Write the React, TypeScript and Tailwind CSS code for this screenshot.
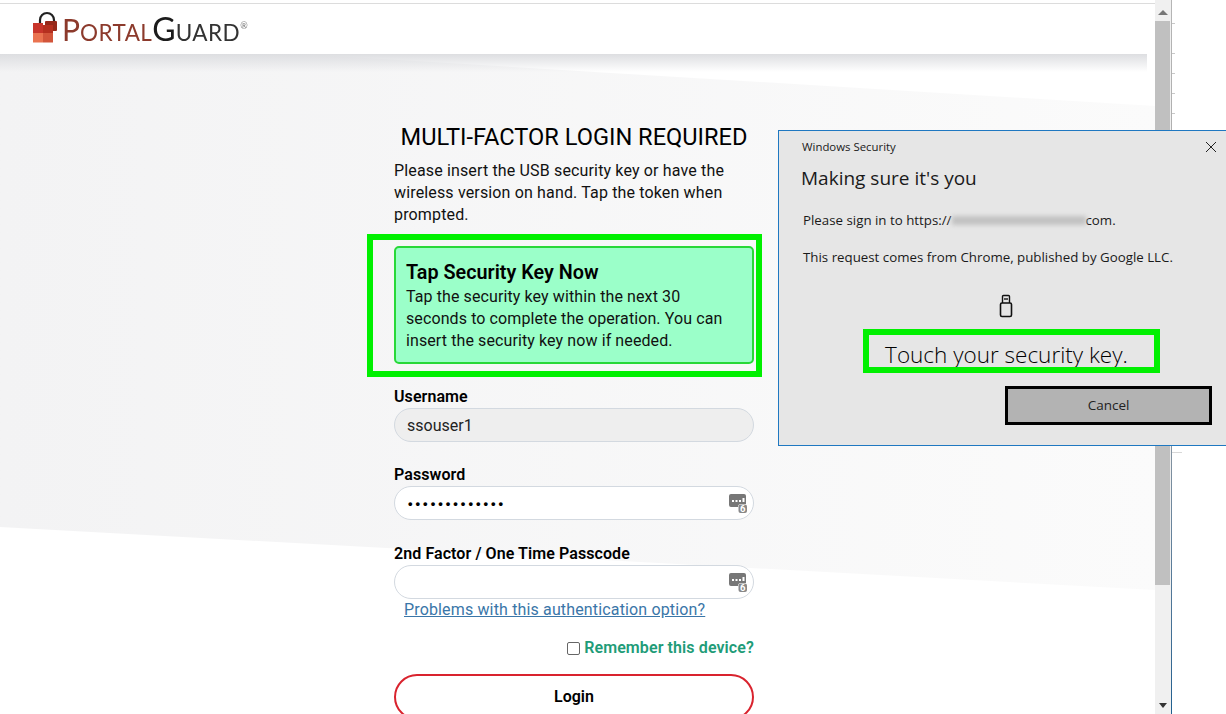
import { Fragment } from "react";

const ticks = ["top-[23px]", "top-[53px]", "top-[73px]", "top-[93px]", "top-[113px]"];

function OtpIcon() {
    return (
        <svg width="18" height="19" viewBox="0 0 18 19" className="absolute right-[6px] top-[7px]">
            <path d="M2 0h13a2 2 0 0 1 2 2v8h-5a3 3 0 0 0-3 3H2a2 2 0 0 1-2-2V2a2 2 0 0 1 2-2z" fill="#777" />
            <rect x="3" y="6" width="2" height="2" fill="#fff" />
            <rect x="6.5" y="6" width="2" height="2" fill="#fff" />
            <rect x="10" y="6" width="2" height="2" fill="#fff" />
            <rect x="13.5" y="4" width="2" height="4" fill="#fff" />
            <rect x="9.5" y="10.5" width="8.5" height="8.5" rx="2" fill="#888" />
            <text x="13.8" y="18" textAnchor="middle" fontSize="9.5" fontWeight="700" fill="#fff" fontFamily="Roboto, sans-serif">6</text>
        </svg>
    );
}

function Logo() {
    return (
        <div className="flex items-end h-[50px] pl-[32px] pb-[9px]">
            <svg width="26" height="32" viewBox="0 0 26 32" className="mr-[4px] mb-[2px] blur-[0.3px]">
                <path d="M8 14V9a7 7 0 0 1 14 0v4" fill="none" stroke="#222" strokeWidth="2.2" />
                <rect x="1" y="12" width="10" height="10" fill="#c8352b" />
                <rect x="13" y="10" width="12" height="10" rx="1" fill="#96291a" />
                <rect x="1" y="22" width="10" height="9.5" fill="#ea7350" />
                <rect x="11" y="22" width="10" height="9.5" fill="#d2553a" />
                <rect x="11" y="14" width="10" height="8" fill="#b5301f" />
            </svg>
            <div className="flex items-baseline font-['Lato',sans-serif] leading-none blur-[0.3px]">
                <span className="text-[30px] text-[#8c3a2c]">P</span>
                <span className="text-[22.5px] tracking-[0.45px] text-[#8c3a2c]">ORTAL</span>
                <span className="text-[32px] text-[#1c1c1c]">G</span>
                <span className="text-[22.5px] tracking-[0.45px] text-[#333]">UARD</span>
                <span className="text-[9px] self-start mt-[8px] text-[#777]">®</span>
            </div>
        </div>
    );
}

function Field({ label, value, disabled, dots, icon, mt }: { label: string; value?: string; disabled?: boolean; dots?: boolean; icon?: boolean; mt: string }) {
    return (
        <Fragment>
            <div className={`${mt} text-[16px] font-semibold tracking-[0.08px] leading-[20px] text-black`}>{label}</div>
            <div
                className={`relative mt-[1px] h-[34px] rounded-full border border-[#d3d9e0] pl-[12px] pt-[1px] flex items-center text-[16px] text-[#222] ${
                    disabled ? "bg-[#eeeeee]" : "bg-white"
                }`}
            >
                {dots ? <span className="text-[13px] font-bold tracking-[3px] text-black font-['Liberation_Sans',sans-serif] ml-[1px]">•••••••••••••</span> : value}
                {icon ? <OtpIcon /> : null}
            </div>
        </Fragment>
    );
}

function WindowsDialog() {
    return (
        <div className="absolute left-[778px] top-[130px] w-[448px] h-[316px] bg-[#e6e6e6] border border-[#1f78c1] border-r-0 font-['Open_Sans',sans-serif] text-[#1a1a1a]">
            <div className="flex items-start justify-between pl-[23px] pr-[9px] pt-[7px]">
                <span className="text-[11.4px] leading-[18px]">Windows Security</span>
                <svg width="12" height="12" viewBox="0 0 12 12" className="mt-[3px]">
                    <path d="M1 1l10 10M11 1L1 11" stroke="#222" strokeWidth="1" />
                </svg>
            </div>
            <div className="pl-[22px] mt-[9px] text-[19px] leading-[26px]">Making sure it's you</div>
            <div className="pl-[24px] mt-[20px] text-[13.3px] leading-[18px] flex items-center">
                Please sign in to https://
                <span className="inline-block w-[134px] h-[9px] bg-[#c2c2c2] blur-[2px]" />
                com.
            </div>
            <div className="pl-[24px] mt-[19px] text-[13.3px] leading-[18px]">This request comes from Chrome, published by Google LLC.</div>
            <div className="flex justify-center mt-[28px] pl-[7px]">
                <svg width="16" height="24" viewBox="0 0 16 24">
                    <path d="M4.5 9V2.5a1 1 0 0 1 1-1h5a1 1 0 0 1 1 1V9" fill="none" stroke="#111" strokeWidth="1.4" />
                    <rect x="6" y="4" width="4" height="2" fill="#555" />
                    <rect x="2.5" y="9" width="11" height="13.5" rx="1.5" fill="none" stroke="#111" strokeWidth="1.6" />
                </svg>
            </div>
            <div className="flex justify-center mt-[20px] pl-[8px] text-[22.5px] leading-[34px] font-light text-black">Touch your security key.</div>
            <div className="flex justify-end pr-[14px] mt-[14px]">
                <div className="w-[207px] h-[39px] bg-[#b3b3b3] border-[3px] border-black flex items-center justify-center text-[13.5px] text-[#222]">Cancel</div>
            </div>
        </div>
    );
}

export default function App() {
    return (
        <div className="relative w-[1226px] h-[714px] overflow-hidden bg-white font-['Roboto',sans-serif]">
            <div className="flex h-full">
                <div className="relative w-[1155px] shrink-0 overflow-hidden">
                    {/* slanted grey backdrop */}
                    <div className="absolute inset-0 bg-gradient-to-r from-[#f3f3f4] to-[#fbfbfb] [clip-path:polygon(0_54px,300px_54px,1155px_106px,1155px_590px,0_527px)]" />
                    <div className="absolute left-0 right-[8px] top-[54px] h-[18px] bg-gradient-to-b from-[#dddee1] to-transparent" />
                    <div className="relative">
                        <div className="h-[4px] border-t border-t-white border-b border-b-[#dcdcdc]" />
                        <div className="h-[50px] bg-white">
                            <Logo />
                        </div>
                        <div className="ml-[394px] w-[360px] pt-[69px]">
                            <h1 className="text-center text-[23.6px] leading-[28px] text-black whitespace-nowrap">MULTI-FACTOR LOGIN REQUIRED</h1>
                            <p className="mt-[9px] text-[16px] tracking-[0.15px] leading-[22px] text-[#111]">
                                Please insert the USB security key or have the wireless version on hand. Tap the token when prompted.
                            </p>
                            <div className="mt-[20px] h-[118px] rounded-[5px] border-2 border-[#28d838] bg-[#9bffc9] px-[10px] pt-[14px] text-[#111]">
                                <div className="text-[19.8px] font-semibold leading-[22px] text-black">Tap Security Key Now</div>
                                <p className="text-[16px] tracking-[0.1px] leading-[22px] mt-[2px]">
                                    Tap the security key within the next 30 seconds to complete the operation. You can insert the security key now if needed.
                                </p>
                            </div>
                            <Field label="Username" value="ssouser1" disabled mt="mt-[23px]" />
                            <Field label="Password" dots icon mt="mt-[23px]" />
                            <Field label="2nd Factor / One Time Passcode" icon mt="mt-[24px]" />
                            <a className="block ml-[10px] mt-[1px] text-[16px] tracking-[0.15px] leading-[20px] text-[#3a76a8] underline">Problems with this authentication option?</a>
                            <div className="mt-[18px] flex items-center justify-end">
                                <span className="h-[13px] w-[13px] rounded-[2px] border border-[#666] bg-white" />
                                <span className="ml-[4px] text-[16px] font-semibold tracking-[0.1px] leading-[20px] text-[#1f9c78]">Remember this device?</span>
                            </div>
                            <div className="mt-[16px] h-[46px] rounded-full border-2 border-[#d9232e] bg-white flex items-center justify-center text-[16px] font-semibold text-black">Login</div>
                        </div>
                    </div>
                </div>
                <div className="w-[16px] shrink-0 pt-[4px] flex flex-col bg-[#f0f0f0] items-stretch">
                    <div className="h-[17px] flex items-center justify-center">
                        <span className="border-x-[5px] border-x-transparent border-b-[5px] border-b-[#777]" />
                    </div>
                    <div className="h-[564px] bg-[#c0c0c0] mr-[1px]" />
                    <div className="flex-1" />
                    <div className="h-[17px] flex items-center justify-center">
                        <span className="border-x-[4px] border-x-transparent border-t-[5px] border-t-[#333]" />
                    </div>
                </div>
                <div className="w-px shrink-0 bg-gradient-to-b from-[#b5b5b5] via-[#a5a5a5] to-[#1f5f8f]" />
            </div>
            {/* stray ruler ticks to the right of the scrollbar */}
            {ticks.map((t) => (
                <div key={t} className={`absolute left-[1172px] ${t} w-[3px] h-px bg-[#c8c8c8]`} />
            ))}
            <div className="absolute left-[1172px] top-[452px] w-[10px] h-px bg-[#d8d8d8]" />
            {/* annotation boxes over the screenshot */}
            <div className="absolute left-[367px] top-[234px] w-[395px] h-[143px] border-[6px] border-[#00f000]" />
            <WindowsDialog />
            <div className="absolute left-[863px] top-[329px] w-[297px] h-[44px] border-[6px] border-[#00f000]" />
        </div>
    );
}
